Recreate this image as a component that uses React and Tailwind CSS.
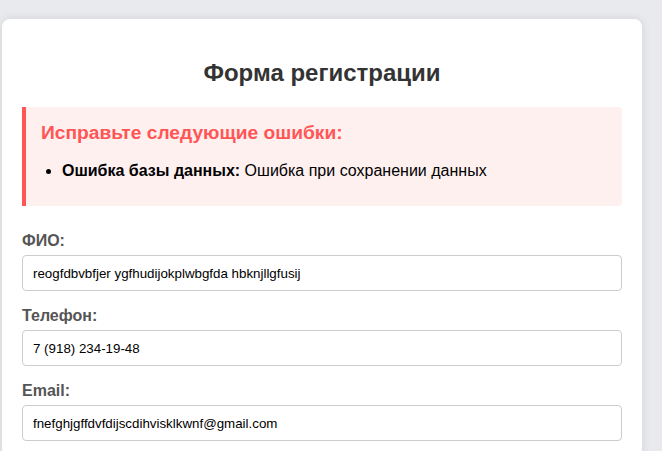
import React, { useState } from "react";

const Field = ({ label, type, value, onChange }) => (
  <div className="mb-[15px]">
    <label className="block mb-[5px] text-[16px] leading-[19px] font-bold text-[#555]">{label}</label>
    <input
      type={type}
      value={value}
      onChange={(e) => onChange(e.target.value)}
      className="block w-full h-[36px] px-[10px] border border-[#ccc] rounded-[4px] text-[13.33px] text-black bg-white outline-none"
    />
  </div>
);

const App = () => {
  const [fio, setFio] = useState("reogfdbvbfjer ygfhudijokplwbgfda hbknjllgfusij");
  const [phone, setPhone] = useState("7 (918) 234-19-48");
  const [email, setEmail] = useState("fnefghjgffdvfdijscdihvisklkwnf@gmail.com");

  return (
    <div className="min-h-screen bg-[#e8eaed] pl-[2px] pt-[19px] font-['Liberation_Sans',Arial,sans-serif]">
      <div className="w-[640px] bg-white rounded-[8px] shadow-[0_0_10px_rgba(0,0,0,0.1)] px-[20px] pt-[20px] pb-[20px]">
        <h2 className="my-[20px] text-center text-[24px] leading-[28px] font-bold text-[#333]">
          Форма регистрации
        </h2>

        <div className="bg-[#fff0f0] border-l-4 border-[#ff5555] rounded-r-[4px] p-[15px] mb-[25px]">
          <h3 className="text-[19.2px] leading-[21px] font-bold text-[#ff5555] mb-[19px]">
            Исправьте следующие ошибки:
          </h3>
          <ul className="list-disc pl-[21px] mb-[11px] text-[16px] leading-[18px] text-black">
            <li>
              <strong>Ошибка базы данных:</strong> Ошибка при сохранении данных
            </li>
          </ul>
        </div>

        <form onSubmit={(e) => e.preventDefault()}>
          <Field label="ФИО:" type="text" value={fio} onChange={setFio} />
          <Field label="Телефон:" type="tel" value={phone} onChange={setPhone} />
          <Field label="Email:" type="email" value={email} onChange={setEmail} />
        </form>
      </div>
    </div>
  );
};

export default App;
